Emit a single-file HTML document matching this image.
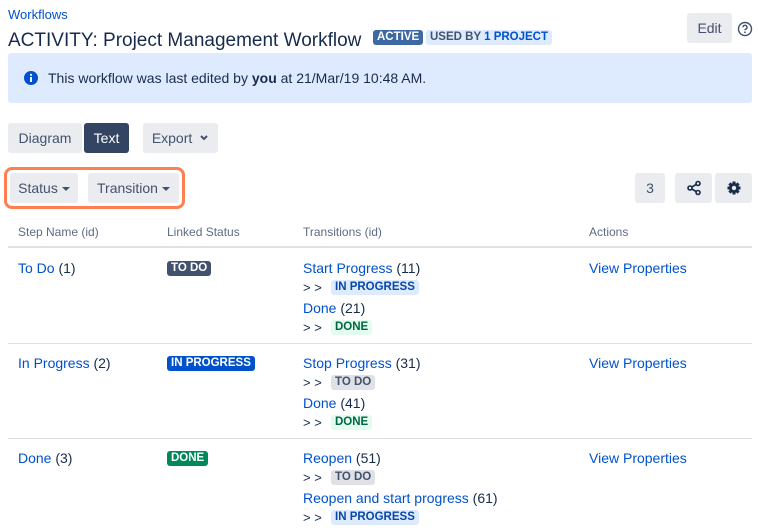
<!DOCTYPE html>
<html><head><meta charset="utf-8"><style>
*{box-sizing:border-box;margin:0;padding:0}
body{width:758px;height:532px;overflow:hidden;background:#fff;font-family:"Liberation Sans",sans-serif;color:#172b4d;font-size:14px;position:relative}
.a{position:absolute;white-space:nowrap;line-height:16px}
.lk{color:#0052cc}
.btn{position:absolute;background:#ebecf0;border-radius:3px;color:#42526e;font-size:14px;text-align:center;line-height:30px;height:30px}
.loz{display:inline-block;font-size:11.5px;font-weight:bold;padding:0 4px;border-radius:3px;line-height:15px;height:15px;vertical-align:top}
.gray{background:#dfe1e6;color:#42526e}
.dark{background:#42526e;color:#fff}
.blue{background:#0052cc;color:#fff}
.lblue{background:#deebff;color:#0747a6}
.green{background:#00875a;color:#fff}
.lgreen{background:#e3fcef;color:#006644}
.th{font-size:12px;color:#5e6c84;top:224px}
.fx{display:flex;align-items:center}
.gt{font-size:13px;color:#172b4d;display:inline-block;width:28px;line-height:15px}
.line{position:absolute;left:8px;width:744px;background:#dfe1e6}
.caret{display:inline-block;width:0;height:0;border-left:4px solid transparent;border-right:4px solid transparent;border-top:4px solid #42526e;vertical-align:2px;margin-left:4px}
</style></head><body>
<div class="a lk" style="left:8px;top:7px;font-size:13px">Workflows</div>
<div class="a" style="left:8px;top:31px;font-size:19px;line-height:20px">ACTIVITY: Project Management Workflow</div>
<div class="a loz" style="left:373px;top:30px;background:#3e6aa3;color:#fff">ACTIVE</div>
<div class="a loz" style="left:426px;top:30px;background:#deebff;color:#42526e">USED BY <span style="color:#0052cc">1 PROJECT</span></div>
<div class="btn" style="left:687px;top:13px;width:45px">Edit</div>
<svg class="a" style="left:737px;top:21px" width="16" height="16" viewBox="0 0 16 16"><circle cx="8" cy="8" r="6.5" fill="none" stroke="#42526e" stroke-width="1.4"/><path d="M6 6.3a2 2 0 1 1 2.6 1.9c-.5.2-.6.5-.6 1.1" fill="none" stroke="#42526e" stroke-width="1.4"/><circle cx="8" cy="11.3" r=".9" fill="#42526e"/></svg>
<div class="a" style="left:8px;top:53px;width:744px;height:50px;background:#deebff;border-radius:3px"></div>
<svg class="a" style="left:24px;top:71px" width="14" height="14" viewBox="0 0 14 14"><circle cx="7" cy="7" r="7" fill="#0052cc"/><rect x="6" y="6" width="2" height="5" fill="#fff"/><circle cx="7" cy="3.8" r="1.1" fill="#fff"/></svg>
<div class="a" style="left:48px;top:70px;color:#172b4d">This workflow was last edited by <b>you</b> at 21/Mar/19 10:48 AM.</div>
<div class="btn" style="left:8px;top:123px;width:74px">Diagram</div>
<div class="btn" style="left:84px;top:123px;width:45px;background:#344563;color:#fff">Text</div>
<div class="btn" style="left:143px;top:123px;width:75px">Export <svg width="10" height="8" viewBox="0 0 10 8" style="vertical-align:1px;margin-left:3px"><path d="M2 2l3 3 3-3" fill="none" stroke="#42526e" stroke-width="2"/></svg></div>
<div class="a" style="left:4px;top:167px;width:181px;height:42px;border:3px solid #ff7f50;border-radius:8px"></div>
<div class="btn" style="left:10px;top:173px;width:68px">Status<span class="caret"></span></div>
<div class="btn" style="left:88px;top:173px;width:91px">Transition<span class="caret"></span></div>
<div class="btn" style="left:635px;top:173px;width:30px">3</div>
<div class="btn" style="left:675px;top:173px;width:37px"><svg width="16" height="16" viewBox="0 0 16 16" style="vertical-align:-3px"><circle cx="12" cy="3.5" r="2" fill="none" stroke="#172b4d" stroke-width="1.6"/><circle cx="12" cy="12.5" r="2" fill="none" stroke="#172b4d" stroke-width="1.6"/><circle cx="4" cy="8" r="2" fill="none" stroke="#172b4d" stroke-width="1.6"/><path d="M5.8 7l4.4-2.5M5.8 9l4.4 2.5" stroke="#172b4d" stroke-width="1.6"/></svg></div>
<div class="btn" style="left:715px;top:173px;width:37px"><svg width="16" height="16" viewBox="0 0 16 16" style="vertical-align:-3px"><g stroke="#172b4d" stroke-width="3"><path d="M8 1.5v13M1.5 8h13M3.4 3.4l9.2 9.2M12.6 3.4l-9.2 9.2"/></g><circle cx="8" cy="8" r="5" fill="#172b4d"/><circle cx="8" cy="8" r="2.2" fill="#ebecf0"/></svg></div>
<div class="a th" style="left:18px">Step Name (id)</div>
<div class="a th" style="left:167px">Linked Status</div>
<div class="a th" style="left:303px">Transitions (id)</div>
<div class="a th" style="left:589px">Actions</div>
<div class="line" style="top:246px;height:2px"></div>
<div class="line" style="top:343px;height:1px"></div>
<div class="line" style="top:438px;height:1px"></div>

<div class="a" style="left:18px;top:260px"><span class="lk">To Do</span> (1)</div>
<div class="a" style="left:167px;top:261px"><span class="loz dark">TO DO</span></div>
<div class="a" style="left:303px;top:260px"><span class="lk">Start Progress</span> (11)</div>
<div class="a fx" style="left:303px;top:280px"><span class="gt">&gt; &gt;</span><span class="loz lblue">IN PROGRESS</span></div>
<div class="a" style="left:303px;top:300px"><span class="lk">Done</span> (21)</div>
<div class="a fx" style="left:303px;top:320px"><span class="gt">&gt; &gt;</span><span class="loz lgreen">DONE</span></div>
<div class="a lk" style="left:589px;top:260px">View Properties</div>

<div class="a" style="left:18px;top:355px"><span class="lk">In Progress</span> (2)</div>
<div class="a" style="left:167px;top:356px"><span class="loz blue">IN PROGRESS</span></div>
<div class="a" style="left:303px;top:355px"><span class="lk">Stop Progress</span> (31)</div>
<div class="a fx" style="left:303px;top:375px"><span class="gt">&gt; &gt;</span><span class="loz gray">TO DO</span></div>
<div class="a" style="left:303px;top:395px"><span class="lk">Done</span> (41)</div>
<div class="a fx" style="left:303px;top:415px"><span class="gt">&gt; &gt;</span><span class="loz lgreen">DONE</span></div>
<div class="a lk" style="left:589px;top:355px">View Properties</div>

<div class="a" style="left:18px;top:450px"><span class="lk">Done</span> (3)</div>
<div class="a" style="left:167px;top:451px"><span class="loz green">DONE</span></div>
<div class="a" style="left:303px;top:450px"><span class="lk">Reopen</span> (51)</div>
<div class="a fx" style="left:303px;top:470px"><span class="gt">&gt; &gt;</span><span class="loz gray">TO DO</span></div>
<div class="a" style="left:303px;top:490px"><span class="lk">Reopen and start progress</span> (61)</div>
<div class="a fx" style="left:303px;top:510px"><span class="gt">&gt; &gt;</span><span class="loz lblue">IN PROGRESS</span></div>
<div class="a lk" style="left:589px;top:450px">View Properties</div>
</body></html>
